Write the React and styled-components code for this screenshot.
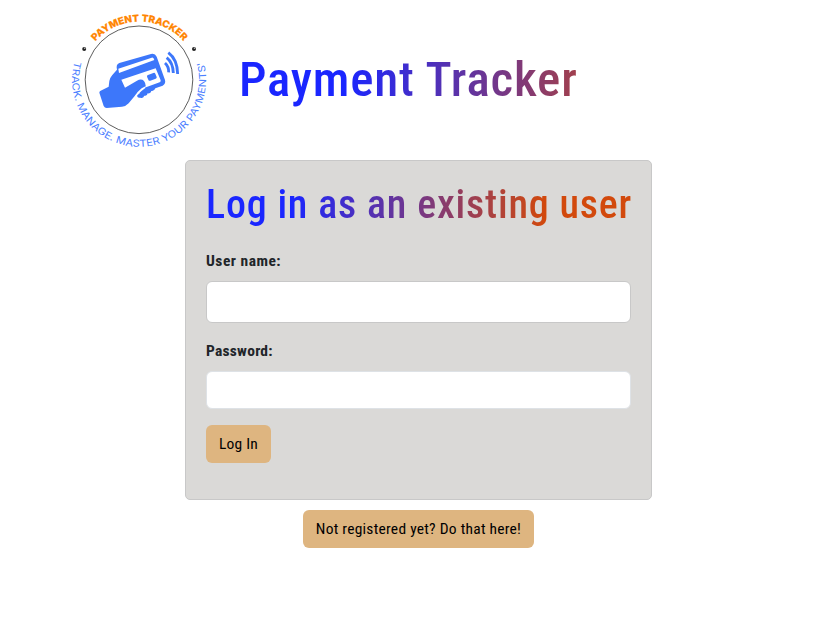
import React from 'react';
import styled, { createGlobalStyle } from 'styled-components';

const GlobalStyle = createGlobalStyle`
  *, *::before, *::after { box-sizing: border-box; }
  body {
    margin: 0;
    background: #fff;
    color: #212529;
    font: 400 16px/24px Roboto, 'Liberation Sans', sans-serif;
  }
`;

const Container = styled.main`
  width: 720px;
  margin: 0 auto;
  padding: 0 12px;
`;

const Header = styled.header`
  display: flex;
  align-items: center;
  height: 160px;
`;

const Logo = styled.svg`
  flex: none;
  width: 150px;
  height: 150px;
  margin-left: -6.5px;
`;

const gradientText = `
  margin: 0;
  background: linear-gradient(90deg, #1a26ff 20%, #d2490c 80%);
  -webkit-background-clip: text;
  background-clip: text;
  color: transparent;
  white-space: nowrap;
`;

const Title = styled.h1`
  ${gradientText}
  flex: 1;
  margin-left: 25px;
  font-size: 49px;
  font-weight: 500;
  font-stretch: 75%;
  line-height: 60px;
  letter-spacing: .82px;
`;

const Card = styled.section`
  width: 467px;
  height: 340px;
  margin: 0 auto;
  padding: 20px;
  border: 1px solid #c8c8c8;
  border-radius: 5px;
  background: #dad9d7;
`;

const Heading = styled.h2`
  ${gradientText}
  font-size: 40px;
  font-weight: 500;
  font-stretch: 75%;
  line-height: 48px;
  letter-spacing: .8px;
`;

const Label = styled.label`
  display: block;
  margin-top: ${({ $gap }) => $gap}px;
  margin-bottom: 8px;
  font-size: 15.5px;
  font-weight: 700;
  font-stretch: 75%;
  letter-spacing: ${({ $spacing }) => $spacing}px;
`;

const Input = styled.input`
  display: block;
  width: 100%;
  height: ${({ $height }) => $height}px;
  padding: 6px 12px;
  border: 1px solid ${({ $border }) => $border};
  border-radius: 6px;
  background: #fff;
  font: inherit;
`;

const Button = styled.button`
  display: block;
  width: ${({ $width }) => $width}px;
  height: 38px;
  padding: 0;
  border: 0;
  border-radius: 6px;
  background: #deb580;
  color: #000;
  font: inherit;
  font-size: 15.5px;
  font-stretch: 75%;
  letter-spacing: .25px;
  white-space: nowrap;
`;

const Actions = styled.div`
  display: flex;
  margin-top: 16px;
`;

const Registration = styled.div`
  display: flex;
  justify-content: center;
  margin-top: 10px;
`;

function TrackerLogo() {
  return (
    <Logo viewBox="0 1 150 150" role="img" aria-label="Payment Tracker logo">
      <defs>
        <path id="upper-arc" d="M31.4 37.2A59.5 59.5 0 0 1 120.4 38" />
        <path id="lower-arc" d="M10.6 57.5A67 67 0 1 0 139.5 57.5" />
      </defs>
      <circle cx="75" cy="75.8" r="53.8" fill="none" stroke="#333" strokeWidth=".8" />
      <text fill="#ff8500" stroke="#ff8500" strokeWidth=".25" fontFamily="Inter, sans-serif" fontWeight="800" fontSize="9.6" textLength="99" lengthAdjust="spacingAndGlyphs">
        <textPath href="#upper-arc" textLength="99" lengthAdjust="spacingAndGlyphs">PAYMENT TRACKER</textPath>
      </text>
      <text fill="#4c80ff" fontFamily="Inter, sans-serif" fontWeight="400" fontSize="9.8" textLength="247" lengthAdjust="spacingAndGlyphs">
        <textPath href="#lower-arc" textLength="247" lengthAdjust="spacingAndGlyphs">TRACK. MANAGE. MASTER YOUR PAYMENTS'</textPath>
      </text>
      <g fill="#222">
        <circle cx="20.2" cy="45" r="2" /><circle cx="130" cy="45" r="2" />
      </g>
      <g fill="#bbb">
        <circle cx="20.7" cy="44.3" r=".8" /><circle cx="130.5" cy="44.3" r=".8" />
      </g>
      <g transform="scale(.33333)">
        <path fill="#3d77fa" d="M106 266Q106 262 110 260L134 248L136 231Q138 221 145 213L159 197Q155 181 166 177L261 150Q273 147 278 158L303 228Q306 239 296 245L274 253Q270 263 262 261Q260 270 251 268Q250 277 241 275Q237 284 229 281Q218 283 220 273L229 267L217 270L194 298Q186 307 174 308L128 312Q122 312 119 306Z" />
        <path fill="#fff" d="M163 194L263 161Q268 159 271 168L165 207ZM172 227L275 193L290 229Q291 233 287 235L246 250Q245 236 240 231Q232 223 219 230L183 251Z" />
        <path fill="#fff" d="M246 246L244 252Q233 260 224 269L212 277Q222 261 233 253Z" />
        <path fill="#3d77fa" d="M250 214L268 207Q272 205 274 209L278 219Q279 222 275 224L259 230Q255 232 253 227L249 218Z" />
        <g fill="none" stroke="#3d77fa" strokeWidth="8.5">
          <path d="M303 177Q315 188 314 205" />
          <path d="M308 161Q327 176 328 207" />
          <path d="M313 146Q340 166 341 210" />
        </g>
      </g>
    </Logo>
  );
}

export default function App() {
  return (
    <>
      <GlobalStyle />
      <Container>
        <Header>
          <TrackerLogo />
          <Title>Payment Tracker</Title>
        </Header>
        <Card>
          <Heading>Log in as an existing user</Heading>
          <Label htmlFor="username" $gap={20} $spacing={0.5}>User name:</Label>
          <Input id="username" type="text" $height={42} $border="#c8c8c8" />
          <Label htmlFor="password" $gap={16} $spacing={0.25}>Password:</Label>
          <Input id="password" type="password" $height={38} $border="#dee2e6" />
          <Actions><Button type="submit" $width={65}>Log In</Button></Actions>
        </Card>
        <Registration>
          <Button type="button" $width={231}>Not registered yet? Do that here!</Button>
        </Registration>
      </Container>
    </>
  );
}
